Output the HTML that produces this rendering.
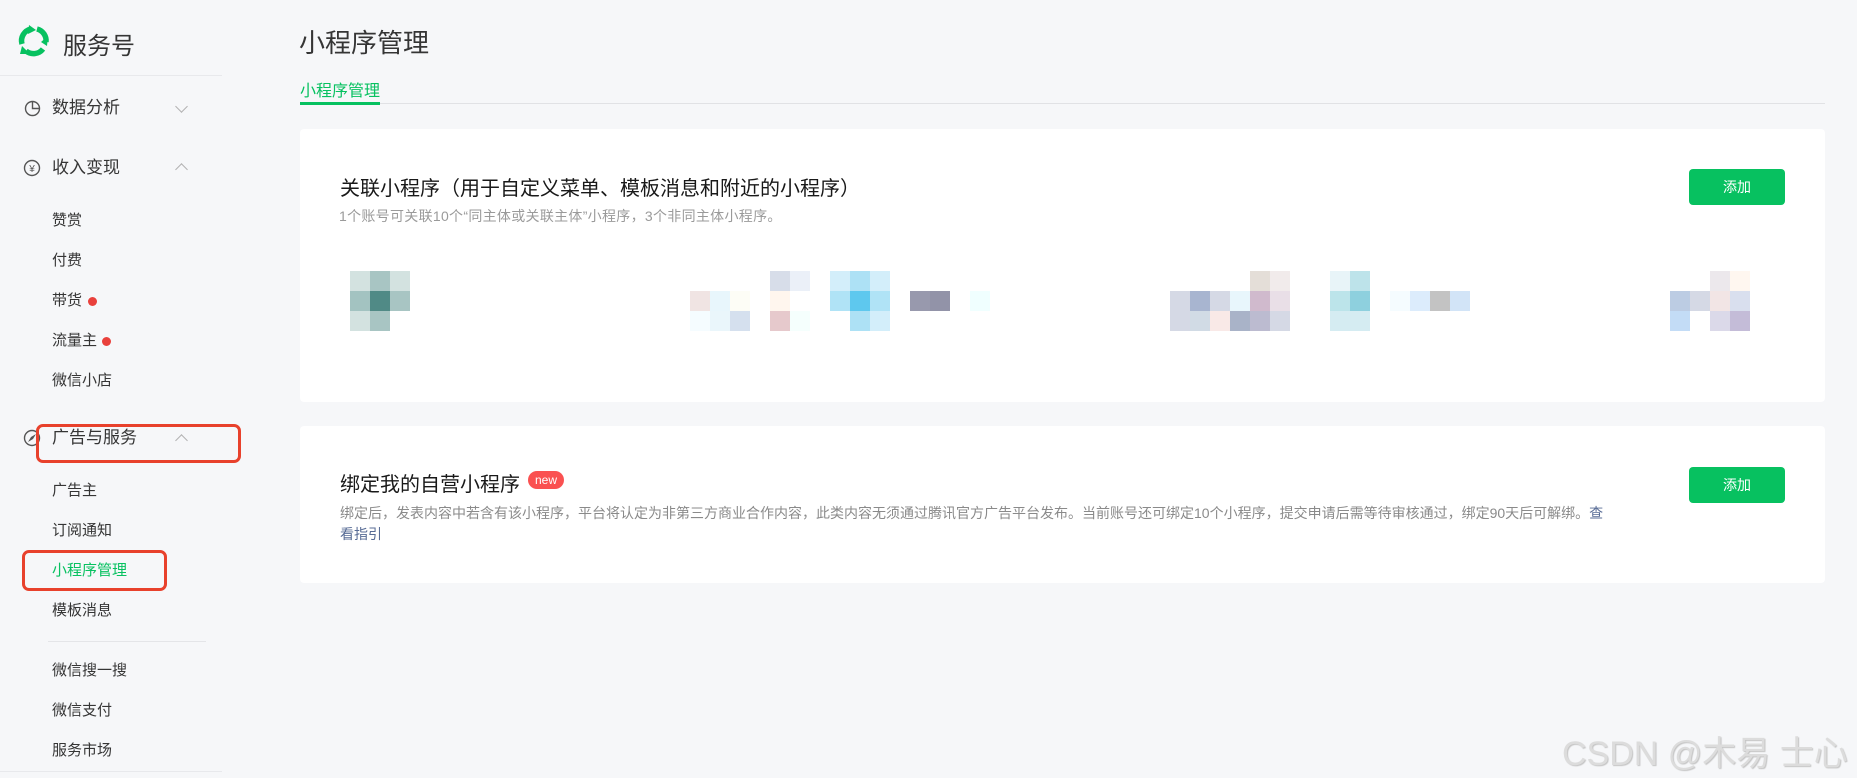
<!DOCTYPE html>
<html><head><meta charset="utf-8">
<style>
*{margin:0;padding:0;box-sizing:border-box}
body{width:1857px;height:778px;overflow:hidden;background:#f6f7f9;font-family:"Liberation Sans","Noto Sans CJK SC",sans-serif;position:relative;color:#353535}
.a{position:absolute;white-space:nowrap}
.side{position:absolute;left:0;top:0;width:222px;height:778px;background:#f6f7f9}
.m{font-size:17px;color:#353535;line-height:24px}
.s{font-size:15px;color:#353535;line-height:20px;left:52px}
.dot{position:absolute;width:9px;height:9px;border-radius:50%;background:#e9413c}
.chev{position:absolute;width:9px;height:9px;border-left:1.5px solid #b2b2b2;border-top:1.5px solid #b2b2b2}
.card{position:absolute;left:300px;width:1525px;background:#fff;border-radius:4px}
.btn{position:absolute;left:1689px;width:96px;height:36px;background:#07c160;border-radius:4px;color:#fff;font-size:14px;text-align:center;line-height:36px}
.px{position:absolute;width:20px;height:20px}
.box{position:absolute;border:3px solid #e8412c;border-radius:7px}
</style></head><body>
<div class="side">
<svg class="a" style="left:17px;top:24px" width="34" height="33" viewBox="0 0 34 33">
<g fill="none" stroke="#07c160" stroke-width="5.5" stroke-linecap="butt">
<path d="M5 20 A12 12 0 0 1 14 5"/>
<path d="M20 5 A12 12 0 0 1 29 18"/>
<path d="M26 25 A12 12 0 0 1 9 27"/>
</g>
<path d="M12 1 L19 6 L11 10Z M31 12 L30 22 L24 18Z M5 22 L13 30 L3 30Z" fill="#07c160"/>
</svg>
<div class="a" style="left:63px;top:26px;font-size:24px;color:#353535">服务号</div>
<div class="a" style="left:0;top:75px;width:222px;height:1px;background:#e8e9ec"></div>

<svg class="a" style="left:24px;top:100px" width="17" height="17" viewBox="0 0 17 17"><circle cx="8.5" cy="8.5" r="7" fill="none" stroke="#555" stroke-width="1.4"/><path d="M8.5 1.5V8.5H15.5" fill="none" stroke="#555" stroke-width="1.4"/></svg>
<div class="a m" style="left:52px;top:96px">数据分析</div>
<div class="chev" style="left:177px;top:102px;transform:rotate(225deg)"></div>

<svg class="a" style="left:23px;top:159px" width="18" height="18" viewBox="0 0 18 18"><circle cx="9" cy="9" r="7.5" fill="none" stroke="#555" stroke-width="1.4"/><text x="9" y="13" font-size="10" text-anchor="middle" fill="#555" font-family="Liberation Sans">¥</text></svg>
<div class="a m" style="left:52px;top:156px">收入变现</div>
<div class="chev" style="left:177px;top:165px;transform:rotate(45deg)"></div>

<div class="a s" style="top:211px">赞赏</div>
<div class="a s" style="top:251px">付费</div>
<div class="a s" style="top:291px">带货</div><div class="dot" style="left:88px;top:297px"></div>
<div class="a s" style="top:331px">流量主</div><div class="dot" style="left:102px;top:337px"></div>
<div class="a s" style="top:371px">微信小店</div>

<svg class="a" style="left:23px;top:429px" width="18" height="18" viewBox="0 0 18 18"><circle cx="9" cy="9" r="7.5" fill="none" stroke="#555" stroke-width="1.4"/><path d="M5 13 L8 8 L13 5 L10 10Z" fill="#555"/></svg>
<div class="a m" style="left:52px;top:426px">广告与服务</div>
<div class="chev" style="left:177px;top:436px;transform:rotate(45deg)"></div>
<div class="box" style="left:36px;top:424px;width:205px;height:39px"></div>

<div class="a s" style="top:481px">广告主</div>
<div class="a s" style="top:521px">订阅通知</div>
<div class="a s" style="top:561px;color:#07c160">小程序管理</div>
<div class="box" style="left:22px;top:550px;width:145px;height:41px"></div>
<div class="a s" style="top:601px">模板消息</div>
<div class="a" style="left:48px;top:641px;width:158px;height:1px;background:#e4e5e8"></div>
<div class="a s" style="top:661px">微信搜一搜</div>
<div class="a s" style="top:701px">微信支付</div>
<div class="a s" style="top:741px">服务市场</div>
<div class="a" style="left:0;top:771px;width:222px;height:1px;background:#e8e9ec"></div>
</div>

<div class="a" style="left:299px;top:23px;font-size:26px;color:#353535">小程序管理</div>
<div class="a" style="left:300px;top:77px;font-size:16px;color:#07c160">小程序管理</div>
<div class="a" style="left:300px;top:103px;width:1525px;height:1px;background:#e1e2e5"></div>
<div class="a" style="left:300px;top:102px;width:80px;height:3px;background:#07c160"></div>

<div class="card" style="top:129px;height:273px"></div>
<div class="a" style="left:340px;top:172px;font-size:20px;color:#191919">关联小程序（用于自定义菜单、模板消息和附近的小程序）</div>
<div class="a" style="left:339px;top:206px;font-size:14px;letter-spacing:0.3px;color:#9a9a9a">1个账号可关联10个“同主体或关联主体”小程序，3个非同主体小程序。</div>
<div class="btn" style="top:169px">添加</div>

<div class="px" style="left:350px;top:271px;background:#d3e2e0"></div><div class="px" style="left:370px;top:271px;background:#a8c5c3"></div><div class="px" style="left:390px;top:271px;background:#d3e2e0"></div>
<div class="px" style="left:350px;top:291px;background:#a3c3c1"></div><div class="px" style="left:370px;top:291px;background:#508a86"></div><div class="px" style="left:390px;top:291px;background:#a8c5c3"></div>
<div class="px" style="left:350px;top:311px;background:#d3e2e0"></div><div class="px" style="left:370px;top:311px;background:#a8c5c3"></div>

<div class="px" style="left:690px;top:291px;background:#f0e4e3"></div><div class="px" style="left:710px;top:291px;background:#e8f6fc"></div><div class="px" style="left:730px;top:291px;background:#fdfdf6"></div>
<div class="px" style="left:690px;top:311px;background:#f5fcff"></div><div class="px" style="left:710px;top:311px;background:#eaf6fb"></div><div class="px" style="left:730px;top:311px;background:#d5e0ee"></div>
<div class="px" style="left:770px;top:271px;background:#d7dde9"></div><div class="px" style="left:790px;top:271px;background:#ebf0f8"></div>
<div class="px" style="left:770px;top:291px;background:#fff6ee"></div>
<div class="px" style="left:770px;top:311px;background:#e6c9cc"></div><div class="px" style="left:790px;top:311px;background:#f5fffd"></div>
<div class="px" style="left:830px;top:271px;background:#d3eefa"></div><div class="px" style="left:850px;top:271px;background:#ade1f5"></div><div class="px" style="left:870px;top:271px;background:#d3eefa"></div>
<div class="px" style="left:830px;top:291px;background:#b0e3f6"></div><div class="px" style="left:850px;top:291px;background:#5ec8ee"></div><div class="px" style="left:870px;top:291px;background:#b0e3f6"></div>
<div class="px" style="left:850px;top:311px;background:#ade1f5"></div><div class="px" style="left:870px;top:311px;background:#d3eefa"></div>
<div class="px" style="left:910px;top:291px;background:#9899ad"></div><div class="px" style="left:930px;top:291px;background:#9293a8"></div>
<div class="px" style="left:970px;top:291px;background:#f0ffff"></div>

<div class="px" style="left:1250px;top:271px;background:#e4ded8"></div><div class="px" style="left:1270px;top:271px;background:#f1ebeb"></div>
<div class="px" style="left:1170px;top:291px;background:#d5d9e5"></div><div class="px" style="left:1190px;top:291px;background:#a8b5d0"></div><div class="px" style="left:1210px;top:291px;background:#d5d9e5"></div><div class="px" style="left:1230px;top:291px;background:#e8f6fc"></div><div class="px" style="left:1250px;top:291px;background:#d0bacd"></div><div class="px" style="left:1270px;top:291px;background:#e9dfe7"></div>
<div class="px" style="left:1170px;top:311px;background:#d5d9e5"></div><div class="px" style="left:1190px;top:311px;background:#d1dbe5"></div><div class="px" style="left:1210px;top:311px;background:#f9e9e7"></div><div class="px" style="left:1230px;top:311px;background:#a9b3c8"></div><div class="px" style="left:1250px;top:311px;background:#bcbbd0"></div><div class="px" style="left:1270px;top:311px;background:#d5d9e5"></div>
<div class="px" style="left:1330px;top:271px;background:#e8f4f8"></div><div class="px" style="left:1350px;top:271px;background:#bde3ea"></div>
<div class="px" style="left:1330px;top:291px;background:#bce4ea"></div><div class="px" style="left:1350px;top:291px;background:#8ed0de"></div>
<div class="px" style="left:1330px;top:311px;background:#d5ecf2"></div><div class="px" style="left:1350px;top:311px;background:#d5ecf2"></div>
<div class="px" style="left:1390px;top:291px;background:#f5fcff"></div><div class="px" style="left:1410px;top:291px;background:#dcecfc"></div><div class="px" style="left:1430px;top:291px;background:#c3c3c3"></div><div class="px" style="left:1450px;top:291px;background:#d2e4f7"></div>

<div class="px" style="left:1710px;top:271px;background:#ece8ec"></div><div class="px" style="left:1730px;top:271px;background:#fff7f0"></div>
<div class="px" style="left:1670px;top:291px;background:#bccce3"></div><div class="px" style="left:1690px;top:291px;background:#d5d9e5"></div><div class="px" style="left:1710px;top:291px;background:#f2e5e5"></div><div class="px" style="left:1730px;top:291px;background:#d9dfee"></div>
<div class="px" style="left:1670px;top:311px;background:#c3dcf6"></div><div class="px" style="left:1710px;top:311px;background:#dbd9e9"></div><div class="px" style="left:1730px;top:311px;background:#c4bcd8"></div>

<div class="card" style="top:426px;height:157px"></div>
<div class="a" style="left:340px;top:468px;font-size:20px;color:#191919">绑定我的自营小程序</div>
<div class="a" style="left:528px;top:471px;width:36px;height:18px;border-radius:9px;background:#fa5151;color:#fff;font-size:12px;line-height:18px;text-align:center">new</div>
<div class="a" style="left:340px;top:503px;font-size:14px;color:#8a8a8a;line-height:21px">绑定后，发表内容中若含有该小程序，平台将认定为非第三方商业合作内容，此类内容无须通过腾讯官方广告平台发布。当前账号还可绑定10个小程序，提交申请后需等待审核通过，绑定90天后可解绑。<span style="color:#576b95">查</span><br><span style="color:#576b95">看指引</span></div>
<div class="btn" style="top:467px">添加</div>

<div class="a" style="left:1562px;top:726px;font-size:34px;color:#dcdcdc;text-shadow:1px 1px 1px #c4c4c4">CSDN @木易 士心</div>
</body></html>
